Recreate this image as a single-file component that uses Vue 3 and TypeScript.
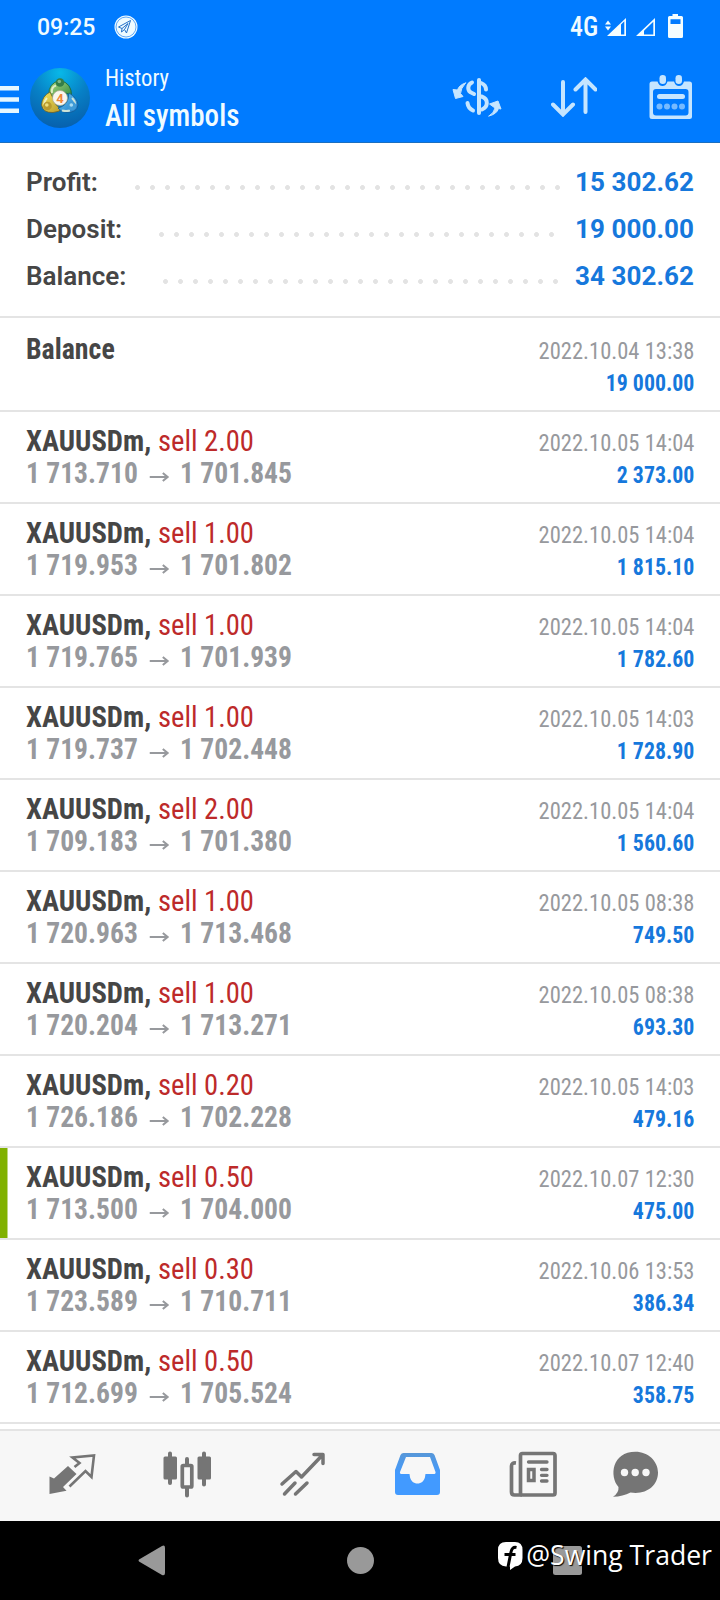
<script setup lang="ts">
interface Deal { symbol: string; side?: string; from?: string; to?: string; time: string; profit: string; marked?: boolean }
const totals = [
  { label: 'Profit:', value: '15 302.62', cls: 't-profit' },
  { label: 'Deposit:', value: '19 000.00', cls: 't-deposit' },
  { label: 'Balance:', value: '34 302.62', cls: 't-balance' },
]
const sell = (lot: string, from: string, to: string, time: string, profit: string, marked = false): Deal =>
  ({ symbol: 'XAUUSDm,', side: 'sell ' + lot, from, to, time: '2022.10.' + time, profit, marked })
const deals: Deal[] = [
  { symbol: 'Balance', time: '2022.10.04 13:38', profit: '19 000.00' },
  sell('2.00', '1 713.710', '1 701.845', '05 14:04', '2 373.00'),
  sell('1.00', '1 719.953', '1 701.802', '05 14:04', '1 815.10'),
  sell('1.00', '1 719.765', '1 701.939', '05 14:04', '1 782.60'),
  sell('1.00', '1 719.737', '1 702.448', '05 14:03', '1 728.90'),
  sell('2.00', '1 709.183', '1 701.380', '05 14:04', '1 560.60'),
  sell('1.00', '1 720.963', '1 713.468', '05 08:38', '749.50'),
  sell('1.00', '1 720.204', '1 713.271', '05 08:38', '693.30'),
  sell('0.20', '1 726.186', '1 702.228', '05 14:03', '479.16'),
  sell('0.50', '1 713.500', '1 704.000', '07 12:30', '475.00', true),
  sell('0.30', '1 723.589', '1 710.711', '06 13:53', '386.34'),
  sell('0.50', '1 712.699', '1 705.524', '07 12:40', '358.75'),
]
</script>

<template>
  <div class="screen">
    <header class="top">
      <div class="status">
        <span class="clock">09:25</span>
        <svg class="tg" width="24" height="24" viewBox="0 0 24 24">
          <circle cx="12" cy="12" r="11.5" fill="#effbff" />
          <circle cx="12" cy="12" r="10" fill="none" stroke="#3b93f5" stroke-width=".8" />
          <path d="M4.500 12 L16.500 5.500 L12.500 18 L10.500 14.500 L7.500 17 L8 13.500 Z M8 13.500 L14 8.500 M10.500 14.500 L14 8.500" fill="none" stroke="#2471c8" stroke-width="1" stroke-linejoin="round" />
        </svg>
        <span class="net">4G</span>
        <svg class="signals" width="80" height="26" viewBox="0 0 80 26" fill="#f4fdff">
          <path d="M0 10.500 L3 6.500 L6 10.500 Z M0 12.500 H6 L3 16.500 Z" />
          <path d="M2 22 L21 4 V22 Z M16 10.500 V20.500 H19.300 V7.300 Z" fill-rule="evenodd" />
          <path d="M31 22 L50 4 V22 Z M39 16.700 V20.500 H48.300 V7.700 Z" fill-rule="evenodd" />
          <path d="M67.500 0 H73 V2 H76.500 Q78 2 78 3.500 V22.500 Q78 24 76.500 24 H64.500 Q63 24 63 22.500 V3.500 Q63 2 64.500 2 H67.500 Z M65.500 5.300 V10 H75.500 V5.300 Z" fill-rule="evenodd" />
        </svg>
      </div>
      <div class="bar">
        <svg class="burger" width="19" height="28" viewBox="0 0 19 28" fill="#e6f7ff"><path d="M0 0H19V4.500H0Z M0 11.300H19V15.800H0Z M0 22.500H19V27H0Z" /></svg>
        <svg class="logo" width="60" height="60" viewBox="0 0 60 60">
          <defs>
            <radialGradient id="disc" cx="50%" cy="8%" r="95%"><stop offset="0" stop-color="#08b8e8" /><stop offset=".5" stop-color="#0780c6" /><stop offset="1" stop-color="#075eab" /></radialGradient>
            <linearGradient id="green" x1="0" y1="0" x2="1" y2="1"><stop offset="0" stop-color="#b2dc83" /><stop offset="1" stop-color="#23833c" /></linearGradient>
            <linearGradient id="gold" x1="0" y1="0" x2="1" y2="1"><stop offset="0" stop-color="#f3e55c" /><stop offset="1" stop-color="#b99a2b" /></linearGradient>
            <linearGradient id="azure" x1="0" y1="0" x2="1" y2="1"><stop offset="0" stop-color="#6fc9ef" /><stop offset="1" stop-color="#1878ca" /></linearGradient>
          </defs>
          <circle cx="30" cy="30" r="30" fill="url(#disc)" />
          <path d="M19 27 Q18 15 30 12.500 Q42 15 41.500 28 Q35 23 29 25 Q23 27 21 32 Z" fill="url(#green)" stroke="#145f37" stroke-width=".8" />
          <path d="M20 24 Q12 28 11.500 37 Q13 45 23 44.500 Q29 44 32 41 Q25 38 24 32 Z" fill="url(#gold)" stroke="#685e2b" stroke-width=".8" />
          <path d="M39 25 Q47.500 30 48 37 Q47 45 36 44.500 Q31 44 28 40 Q36 38 38 31 Z" fill="url(#azure)" stroke="#145b94" stroke-width=".8" />
          <path d="M22 25 Q21 19 26 17.500 M17 30 Q13.500 34 14.500 37 M42 30 Q46 34 45 37 M32 42.500 Q36 43.500 40 42.500" fill="none" stroke="#f2f8d8" stroke-width="2" opacity=".8" />
          <circle cx="30" cy="14.500" r="4.300" fill="#347e48" /><circle cx="29.300" cy="13.500" r="1.800" fill="#7fb987" />
          <circle cx="17.500" cy="38" r="4.300" fill="#b99a2e" /><circle cx="16.800" cy="37" r="1.800" fill="#efe07c" />
          <circle cx="42" cy="38" r="4.300" fill="#3f9ad6" /><circle cx="41.300" cy="37" r="1.800" fill="#a6dbf4" />
          <circle cx="30" cy="30" r="7.500" fill="#f8f6ef" stroke="#aaa98e" stroke-width=".7" />
          <text x="30" y="34.500" text-anchor="middle" font-family="Roboto, sans-serif" font-size="13" font-weight="700" fill="#ef8737">4</text>
        </svg>
        <div class="titles"><div class="sub">History</div><div class="title">All symbols</div></div>
        <svg class="act currency" width="50" height="40" viewBox="0 0 50 40" fill="none" stroke="#c5e5ff" stroke-width="4" stroke-linecap="round">
          <path d="M27 3 V36" />
          <path d="M20 5.500 C15 8 15 14 20 16 L22 17 M29 6 Q34 8 34 12.500 M15.500 26 Q16 31 21 33.500 M29.500 19.500 C37 22 36 30 30 32.500" />
          <path d="M13.500 6 Q7 8 5.500 13 L1 12.500 L3.500 21.500 L11 19.500 L8.500 16.500 Q8.500 12 13.500 6 Z M37 39 Q42 36 43 31 L37.500 27 L46 24 L49 32 L46.500 31.500 Q45 37 37 39 Z" fill="#c5e5ff" stroke-width="1" stroke-linejoin="round" />
        </svg>
        <svg class="act sort" width="46" height="40" viewBox="0 0 46 40" fill="none" stroke="#c5e5ff" stroke-width="4" stroke-linecap="round">
          <path d="M12 5 V37 M2 27.500 L12 37.500 L22 27.500 M34.500 35 V3 M24.500 12.500 L34.500 2.500 L44.500 12.500" />
        </svg>
        <svg class="act calendar" width="44" height="44" viewBox="0 0 44 44" fill="#c5e5ff">
          <path d="M3 6.500 H8.500 Q10 11 13.500 11 Q17 11 18.500 6.500 H25 Q26.500 11 30 11 Q33.500 11 35 6.500 H40.500 Q43 6.500 43 9 V41.500 Q43 44 40.500 44 H3 Q.5 44 .5 41.500 V9 Q.5 6.500 3 6.500 Z M7 14 Q4 14 4 17 V37.500 Q4 40.500 7 40.500 H36.500 Q39.500 40.500 39.500 37.500 V17 Q39.500 14 36.500 14 Z" fill-rule="evenodd" />
          <rect x="10.500" y="0" width="6.500" height="9" rx="3.200" /><rect x="26.500" y="0" width="6.500" height="9" rx="3.200" /><rect x="8" y="19" width="28" height="5" rx="2.500" />
          <g opacity=".6"><circle cx="10.500" cy="31.500" r="3" /><circle cx="18" cy="31.500" r="3" /><circle cx="25.500" cy="31.500" r="3" /><circle cx="33" cy="31.500" r="3" /></g>
        </svg>
      </div>
    </header>
    <section class="totals">
      <div v-for="t in totals" :key="t.label" class="total" :class="t.cls"><span class="tl">{{ t.label }}</span><i class="dots"></i><b class="tv">{{ t.value }}</b></div>
    </section>
    <main class="list">
      <article v-for="(d, i) in deals" :key="i" class="deal" :class="{ first: !d.side, marked: d.marked }">
        <div class="left">
          <div class="name"><span class="sym">{{ d.symbol }}</span><span v-if="d.side" class="side">{{ d.side }}</span></div>
          <div v-if="d.from" class="route"><span class="px">{{ d.from }}</span>
            <svg class="arrow" width="21" height="12" viewBox="0 0 21 12" fill="none" stroke="#97999d" stroke-width="2.200"><path d="M0 6 H18.500 M14 2 L19 6 L14 10" /></svg>
            <span class="px">{{ d.to }}</span></div>
        </div>
        <div class="right"><div class="time">{{ d.time }}</div><div class="profit">{{ d.profit }}</div></div>
      </article>
    </main>
    <nav class="tabs">
      <svg class="tab" width="48" height="48" viewBox="0 0 48 48">
        <path d="M1.500 24.500 L6 26.500 L20 14 L28.500 22 L15 35 L18.500 38.800 L1.500 42 Z" fill="#757575" />
        <path d="M26.500 15 L31.500 11 L24.500 5.500 L46 3.500 L43.500 25 L37.500 19 L21.500 34.500" fill="none" stroke="#757575" stroke-width="2.600" />
      </svg>
      <svg class="tab" width="48" height="48" viewBox="0 0 48 48" fill="none" stroke="#757575" stroke-width="4" stroke-linecap="round">
        <path d="M7 1.500 V31 M41 1.500 V32.500 M24 7 V13 M24 36 V43.500" /><rect x=".5" y="4.500" width="13.500" height="23" rx="1.500" fill="#757575" stroke="none" /><rect x="34.500" y="4.500" width="13.500" height="23" rx="1.500" fill="#757575" stroke="none" /><rect x="19.300" y="13.500" width="9.500" height="21.500" rx="1" stroke-width="3.700" />
      </svg>
      <svg class="tab" width="48" height="48" viewBox="0 0 48 48" fill="none" stroke="#757575" stroke-width="3.500" stroke-linecap="round" stroke-linejoin="round">
        <path d="M3 32 L17 19.500 L22.500 25 L43.500 3 M35 2.500 H44 V11.500 M5.500 42 L16 31 M16.500 42 L28 31" />
      </svg>
      <svg class="tab" width="48" height="48" viewBox="0 0 48 48">
        <defs><linearGradient id="inbox" x1="0" y1="0" x2="0" y2="1"><stop offset="0" stop-color="#5797d8" /><stop offset=".5" stop-color="#429aff" /></linearGradient></defs>
        <path d="M9.500 1 H37.500 Q39.500 1 40.500 3 L46 18 V40 Q46 43 43 43 H4 Q1 43 1 40 V18 L6.500 3 Q7.500 1 9.500 1 Z M12 5 L6 20 Q5.500 22 8 22 H14.500 C16 22 15.500 22 15.800 24 C17 34 30 34 31.200 24 C31.500 22 31 22 33 22 H39.500 Q42 22 41.500 20 L36 5 Z" fill="url(#inbox)" fill-rule="evenodd" />
      </svg>
      <svg class="tab" width="48" height="48" viewBox="0 0 48 48" fill="none" stroke="#757575" stroke-width="3.700" stroke-linecap="round">
        <rect x="11.500" y="1.500" width="34.500" height="41.500" rx="2" /><path d="M7 11 Q2.500 10.500 2.500 14 V40 Q2.500 43 5.500 43 H13" stroke-linecap="butt" /><path d="M19.500 10 H38 M32.500 17.500 H38 M32.500 23.300 H38 M32.500 29 H38" stroke-width="3.300" /><rect x="19.500" y="17.500" width="5.500" height="11" stroke-width="3.500" />
      </svg>
      <svg class="tab chat" width="48" height="48" viewBox="0 0 48 48">
        <path d="M24.500 -.3 C37 -.3 47 9 47 20.500 C47 34 35 43 19.500 40.500 Q12 44.500 2 44.800 Q8 41 7.500 35 C-2 24 1 -.3 24.500 -.3 Z" fill="#757575" /><g fill="#f7f7f7"><circle cx="13.500" cy="20.500" r="3.700" /><circle cx="24.200" cy="20.500" r="3.700" /><circle cx="35" cy="20.500" r="3.700" /></g>
      </svg>
    </nav>
    <footer class="sys">
      <svg class="keys" width="720" height="79" viewBox="0 0 720 79" fill="#999"><path d="M139 38.500 Q138 39.500 139 40.500 L162 54 Q165 55 165 52 V27 Q165 23.500 162 25 Z" /><circle cx="360.500" cy="39.500" r="13.500" /><rect x="553" y="25" width="29" height="29" rx="2.500" /></svg>
      <div class="mark">
        <svg class="fb" width="25" height="29" viewBox="0 0 25 29"><path d="M8 0 H17 Q24.500 0 24.500 8 V16 Q24.500 24 17 24.500 L12 28 V24.500 H8 Q0 24 0 16 V8 Q0 0 8 0 Z" fill="#fff" /><path d="M18.500 5.500 Q14 4.500 13 10 L10 25 M6.500 12.500 H17.500" fill="none" stroke="#000" stroke-width="3" /></svg>
        <span class="handle">@Swing Trader</span>
      </div>
    </footer>
  </div>
</template>

<style>
body { margin: 0; background: #fff; }
</style>
<style scoped>
.screen { width: 720px; height: 1600px; display: flex; flex-direction: column; background: #fff; font-family: Roboto, "Liberation Sans", sans-serif; overflow: hidden; }
.screen span, .sub, .title, .time, .profit, .tv { white-space: pre; }
.top { height: 142px; background: #007bff; border-bottom: 1px solid #1b6fc0; color: #f0fbff; flex: none; }
.status { height: 54px; display: flex; align-items: flex-start; }
.clock { font-size: 23px; line-height: 28px; margin: 13.500px 0 0 37px; width: 77px; font-weight: 500; }
.tg { margin-top: 15px; }
.net { font-size: 27px; line-height: 30px; font-stretch: 75%; margin: 12px 0 0 432px; width: 35px; font-weight: 500; transform: scaleX(.96); transform-origin: left; }
.signals { margin-top: 14px; }
.bar { height: 88px; display: flex; align-items: flex-start; }
.burger { margin-top: 32px; }
.logo { margin: 14px 0 0 11px; }
.titles { margin-left: 15px; width: 347px; font-stretch: 75%; }
.sub { font-size: 24px; line-height: 30px; margin-top: 9px; font-weight: 450; transform: scaleX(.945); transform-origin: left; }
.title { font-size: 31px; line-height: 36px; margin-top: 5px; font-weight: 500; transform: scaleX(.937); transform-origin: left; }
.currency { margin: 23px 0 0 0; }
.sort { margin: 23px 0 0 49px; }
.calendar { margin: 21px 0 0 51.500px; }
.totals { height: 149px; padding: 24px 26px 0 26px; border-bottom: 2px solid #e4e4e4; flex: none; }
.total { height: 47px; display: flex; font-size: 26px; line-height: 30px; font-weight: 650; color: #464646; }
.tl { flex: none; }
.dots { height: 5px; margin-top: 17.500px; background: radial-gradient(circle at 2.500px 2.500px, #e3e3e3 2.100px, transparent 2.800px) 0 0 / 15px 5px repeat-x; }
.t-profit .tl { width: 109px; } .t-deposit .tl { width: 133px; } .t-balance .tl { width: 137px; }
.t-profit .dots { width: 425px; } .t-deposit .dots { width: 395px; } .t-balance .dots { width: 395px; }
.tv { margin-left: auto; color: #1678dc; font-weight: 700; letter-spacing: .06px; }
.list { flex: none; font-stretch: 75%; }
.deal { height: 90px; border-bottom: 2px solid #e4e4e4; display: flex; justify-content: space-between; padding: 0 26px; }
.deal.first { height: 92px; }
.deal.marked { background: linear-gradient(#80b100, #80b100) left / 7.500px 100% no-repeat padding-box; }
.name { font-size: 29px; line-height: 32px; margin-top: 13px; display: flex; transform: scaleX(.985); transform-origin: left; }
.first .name { margin-top: 15px; transform: scaleX(.96); }
.sym { font-weight: 700; color: #464646; }
.side { color: #bd2a2a; margin-left: 7px; }
.route { display: flex; align-items: center; font-size: 29px; line-height: 32px; font-weight: 700; color: #97999d; transform: scaleX(.95); transform-origin: left; }
.arrow { margin: 7px 11.500px 0 12px; }
.right { text-align: right; font-size: 24.500px; line-height: 32px; padding-top: 15px; }
.first .right { padding-top: 17px; }
.time { color: #97999d; transform: scaleX(.92); transform-origin: right; }
.profit { color: #1678dc; font-weight: 700; font-size: 24px; transform: scaleX(.91); transform-origin: right; }
.tabs { height: 92px; margin-top: 5px; border-top: 2px solid #e4e4e4; background: #f7f7f7; flex: none; display: flex; padding-left: 48px; gap: 67.300px; box-sizing: border-box; }
.tab { margin-top: 21px; overflow: visible; flex: none; }
.chat { margin-left: -13px; }
.sys { height: 79px; background: #000; position: relative; flex: none; }
.keys { display: block; }
.mark { position: absolute; right: 8px; top: 16px; display: flex; align-items: center; height: 36px; color: #fff; }
.fb { margin-top: 3px; }
.handle { font-family: "Open Sans", sans-serif; font-size: 26.600px; text-shadow: 1px 1px 1px #000; margin-left: 3px; }
</style>
